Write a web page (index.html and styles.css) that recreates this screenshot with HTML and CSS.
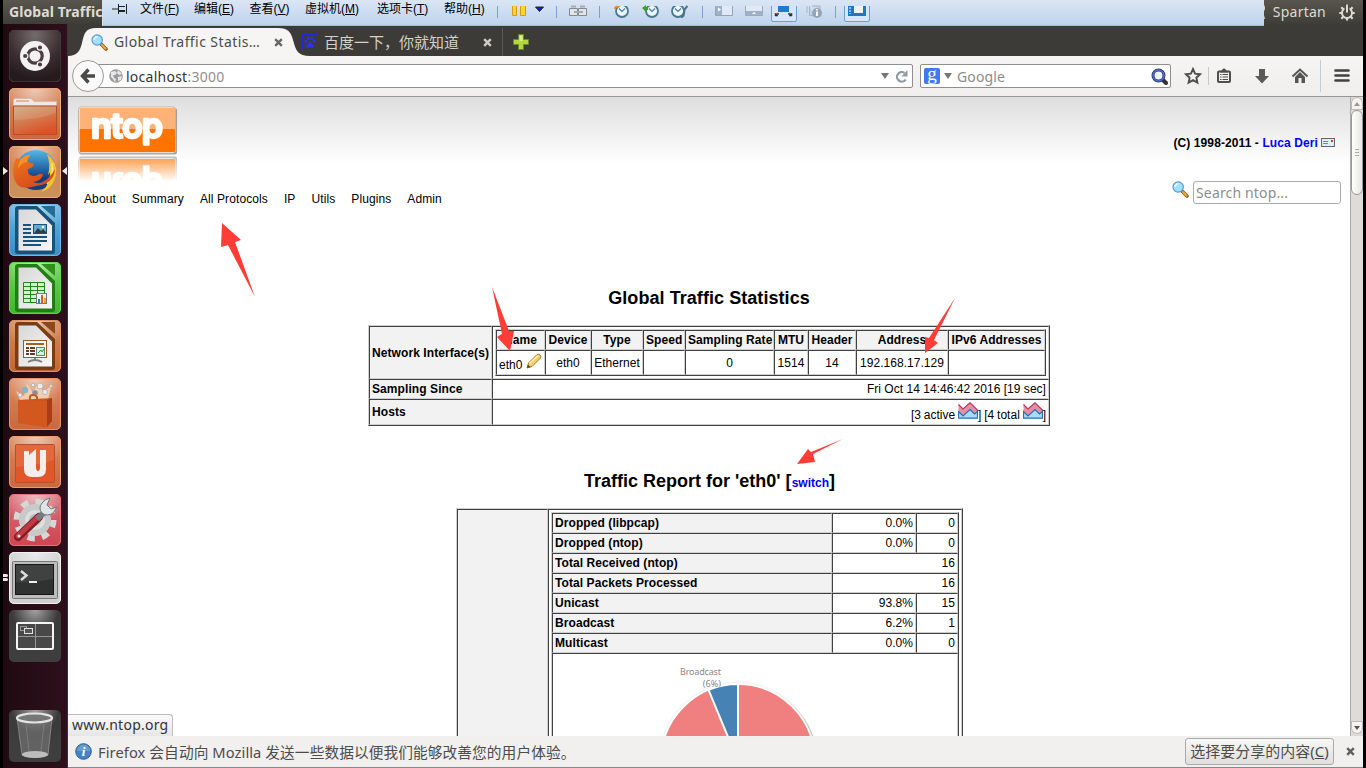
FILE: index.html
```html
<!DOCTYPE html>
<html lang="zh-CN">
<head>
<meta charset="utf-8">
<title>Global Traffic Statistics</title>
<link rel="stylesheet" href="styles.css">
</head>
<body>
<svg class="defs" width="0" height="0" aria-hidden="true">
  <defs>
    <linearGradient id="gOrange" x2="0" y2="1"><stop offset="0" stop-color="#d98b63"/><stop offset="1" stop-color="#c9683f"/></linearGradient>
    <linearGradient id="gTan" x2="0" y2="1"><stop offset="0" stop-color="#d78052"/><stop offset="1" stop-color="#c9935c"/></linearGradient>
    <linearGradient id="gBlue" x2="0" y2="1"><stop offset="0" stop-color="#69b4dd"/><stop offset="1" stop-color="#3a8fc5"/></linearGradient>
    <linearGradient id="gGreen" x2="0" y2="1"><stop offset="0" stop-color="#6fd45c"/><stop offset="1" stop-color="#42b52c"/></linearGradient>
    <linearGradient id="gBrown" x2="0" y2="1"><stop offset="0" stop-color="#d08a5c"/><stop offset="1" stop-color="#bf6a36"/></linearGradient>
    <linearGradient id="gRed" x2="0" y2="1"><stop offset="0" stop-color="#d8707a"/><stop offset="1" stop-color="#cf4450"/></linearGradient>
    <linearGradient id="gPaper" x2="1" y2="1"><stop offset="0" stop-color="#d8d8d8"/><stop offset="1" stop-color="#f6f6f6"/></linearGradient>
    <linearGradient id="gFolder" x2=".5" y2="1"><stop offset="0" stop-color="#c9a77c"/><stop offset="1" stop-color="#dc5327"/></linearGradient>
    <radialGradient id="gDark" cx=".5" cy="0" r=".75"><stop offset="0" stop-color="#a2a2a2"/><stop offset=".6" stop-color="#3a3a3a"/><stop offset="1" stop-color="#3e3e3e"/></radialGradient>
    <radialGradient id="gDash" cx=".5" cy=".1" r=".85"><stop offset="0" stop-color="#756b6d"/><stop offset=".6" stop-color="#3c2f33"/><stop offset="1" stop-color="#251a1d"/></radialGradient>
    <radialGradient id="gGlow" cx=".5" cy="0" r=".6"><stop offset="0" stop-color="#fff" stop-opacity=".55"/><stop offset="1" stop-color="#fff" stop-opacity="0"/></radialGradient>
    <linearGradient id="gGlobe" x2="0" y2="1"><stop offset="0" stop-color="#52b8e8"/><stop offset=".7" stop-color="#123e83"/></linearGradient>
    <linearGradient id="gFox" x2=".6" y2="1"><stop offset="0" stop-color="#ee7a1c"/><stop offset="1" stop-color="#d8481c"/></linearGradient>
    <symbol id="lens" viewBox="0 0 17 17"><path d="M10.5 10.5L15 15" stroke="#8a5a20" stroke-width="3.6" stroke-linecap="round"/><path d="M11 11L14.6 14.6" stroke="#f0a840" stroke-width="2" stroke-linecap="round"/><circle cx="6.2" cy="6" r="5.2" fill="#9fe0fb" stroke="#5b9ad4" stroke-width="1.2"/><path d="M3 6a3.4 3.4 0 0 1 3.6-3.3" fill="none" stroke="#e8fbff" stroke-width="1.6"/></symbol>
    <symbol id="chart" viewBox="0 0 20 17"><path d="M.5 16V2.500L5 7 12 .8 19.500 8V16Z" fill="#e390a6"/><path d="M.5 2.500L5 7 12 .8 19.500 8V10" fill="none" stroke="#b5365a" stroke-width="1.200"/><path d="M.5 16.200V9.500L5 14 12 7.500 16.500 12 19.500 9.500V16.200Z" fill="#a9dbf6" stroke="#2470b5" stroke-width="1.200"/></symbol>
    <symbol id="clock" viewBox="0 0 17 13"><circle cx="9" cy="5" r="6" fill="#e9f6fa" stroke="#47788e" stroke-width="1.800"/><path d="M6 2.500l3 3 3-3" fill="none" stroke="#557a8b" stroke-width="1.200"/></symbol>
  </defs>
</svg>

<div class="desktop">
  <nav class="launcher">
    <svg class="app" viewBox="0 0 52 52"><rect width="52" height="52" rx="6" fill="url(#gDash)" stroke="#4f4246"/><circle cx="26" cy="26" r="15" fill="#f3f1f1"/><circle cx="26" cy="26" r="7.200" fill="none" stroke="#4a3c40" stroke-width="3.200"/><g stroke="#f3f1f1" fill="#4a3c40" stroke-width="1.200"><circle cx="16.200" cy="26" r="2.700"/><circle cx="31" cy="17.500" r="2.700"/><circle cx="31" cy="34.500" r="2.700"/></g></svg>
    <svg class="app" viewBox="0 0 52 52"><rect width="52" height="52" rx="5" fill="url(#gOrange)"/><rect x=".5" y=".5" width="51" height="51" rx="5" fill="url(#gGlow)" stroke="#eca67e"/><path d="M4.500 12.500q0-2 2-2H22l3 3h22.500V18H4.500z" fill="#eee9e6" stroke="#d9b9a6"/><path d="M7 13h13" stroke="#e5a789" stroke-width="1.600"/><path d="M4.500 18h43v28.500h-43z" fill="url(#gFolder)" stroke="#b74d27"/><path d="M5 32Q28 32 47 25V18.500H5z" fill="#fff" opacity=".12"/></svg>
    <div class="app-slot">
      <svg class="app" viewBox="0 0 52 52"><rect width="52" height="52" rx="5" fill="url(#gTan)"/><rect x=".5" y=".5" width="51" height="51" rx="5" fill="url(#gGlow)" stroke="#e8ab7c"/><circle cx="27" cy="24" r="20" fill="url(#gGlobe)"/><path d="M38 8Q49 16 47 28 45 42 32 46 42 38 41 26L39 29Q42 18 38 8z" fill="#f5c527"/><path d="M43 17Q45 30 38 38" fill="none" stroke="#fbe98a" stroke-width="1.500"/><path d="M7 12q2 1 5 1 4-4 10-4-4 3-3 7l6 2q-1 4-6 5-1 6 5 7 4 0 6-2 3-1 4 1-2 6-10 7 9 4 17-6 2-2 5-7-1 15-19 17Q8 46 5 32 3 21 7 12z" fill="url(#gFox)"/><path d="M13 12q5-4 9-3-4 3-4 7-6 1-9 7 0-7 4-11z" fill="#f5902b"/></svg>
      <i class="mark mark-left"></i><i class="mark mark-right"></i>
    </div>
    <svg class="app" viewBox="0 0 52 52"><rect width="52" height="52" rx="5" fill="url(#gBlue)"/><rect x=".5" y=".5" width="51" height="51" rx="5" fill="url(#gGlow)" stroke="#6db7e3"/><path d="M9 2H28L46 19V47q0 3-3 3H9q-3 0-3-3V5q0-3 3-3z" fill="#185279"/><path d="M32 2H46V14z" fill="#256c98"/><path d="M9.500 5.500H27L43 21.500V46.500H9.500z" fill="url(#gPaper)"/><path d="M14 21h8M14 25h8M14 29h8M14 33h24M14 37h24M14 41h18" stroke="#17537e" stroke-width="2"/><rect x="24.500" y="20.500" width="13" height="9" fill="#5dacd8" stroke="#17537e"/><path d="M25 29l4-5 3 3 2-2 4 4z" fill="#303c41"/><circle cx="34" cy="23" r="1.300" fill="#fff"/></svg>
    <svg class="app" viewBox="0 0 52 52"><rect width="52" height="52" rx="5" fill="url(#gGreen)"/><rect x=".5" y=".5" width="51" height="51" rx="5" fill="url(#gGlow)" stroke="#63d64c"/><path d="M9 2H28L46 19V47q0 3-3 3H9q-3 0-3-3V5q0-3 3-3z" fill="#207e12"/><path d="M32 2H46V14z" fill="#2d911c"/><path d="M9.500 5.500H27L43 21.500V46.500H9.500z" fill="url(#gPaper)"/><path d="M14.500 20.500h21v20h-21zM14.500 24.500h21M14.500 28.500h21M14.500 32.500h21M14.500 36.500h21M21.500 20.500v20M28.500 20.500v20" fill="#d9f0ce" stroke="#24861c"/><rect x="27.500" y="31.500" width="10" height="10" fill="#f3f3f3" stroke="#777"/><path d="M29 37h2v4h-2z" fill="#2b80c2"/><path d="M32 33h2v8h-2z" fill="#dd5721"/><path d="M35 36h2v5h-2z" fill="#eba22b"/></svg>
    <svg class="app" viewBox="0 0 52 52"><rect width="52" height="52" rx="5" fill="url(#gBrown)"/><rect x=".5" y=".5" width="51" height="51" rx="5" fill="url(#gGlow)" stroke="#e0935e"/><path d="M9 2H28L46 19V47q0 3-3 3H9q-3 0-3-3V5q0-3 3-3z" fill="#7b3c14"/><path d="M32 2H46V14z" fill="#8e481e"/><path d="M9.500 5.500H27L43 21.500V46.500H9.500z" fill="url(#gPaper)"/><rect x="14.500" y="20.500" width="23" height="17" fill="#fff" stroke="#a5551e"/><path d="M17 24h18" stroke="#b15a1c" stroke-width="2"/><path d="M17 28h3M17 31h3M17 34h3M21 28h5M21 31h5M21 34h5" stroke="#6b3a1f" stroke-width="1.800"/><rect x="27.500" y="27.500" width="8" height="8" fill="#d8f2df" stroke="#4d8e68"/><path d="M29 33l3-3 1 2 2-3" stroke="#25974d" fill="none"/><path d="M26 38v2M19 42q7-4 14 0" stroke="#7d7f80" stroke-width="2" fill="none"/></svg>
    <svg class="app" viewBox="0 0 52 52"><rect width="52" height="52" rx="5" fill="url(#gOrange)"/><rect x=".5" y=".5" width="51" height="51" rx="5" fill="url(#gGlow)" stroke="#e79369"/><path d="M11 22L7 13 15 18 18 6 24 15 30 4 34 14 42 8 39 22z" fill="#f8ddc0" opacity=".75"/><g fill="#e8edf0" stroke="#a7a6a6" stroke-width=".7"><circle cx="16" cy="12" r="3" fill="#78b8d2"/><circle cx="24" cy="7" r="1.700"/><circle cx="31" cy="8" r="3"/><circle cx="26" cy="15" r="2.700" fill="#868d9e"/><circle cx="36" cy="14" r="2.600"/><circle cx="11" cy="17" r="2"/><circle cx="42" cy="8" r="1.500"/></g><path d="M9 22L43 20V43L37 49 9 45z" fill="#d0531e"/><path d="M43 20V43L38 49V22z" fill="#ab3c16"/><path d="M9 22l29 1v26L9 45z" fill="#d3581f"/><path d="M21 23v-4q0-2 3-2t4 2v4" fill="none" stroke="#b8601e" stroke-width="2"/></svg>
    <svg class="app" viewBox="0 0 52 52"><rect width="52" height="52" rx="5" fill="url(#gOrange)"/><rect x=".5" y=".5" width="51" height="51" rx="5" fill="url(#gGlow)" stroke="#ea9c72"/><rect x="6.500" y="8.500" width="39" height="38" rx="1" fill="#e15729" stroke="#b94f2a"/><path d="M7 9h38v15Q28 30 7 31z" fill="#fff" opacity=".1"/><path d="M20 19L27 13V31q0 4 2 4t2-4V14H37V33q0 8-8 8h-6q-8 0-8-8V15h5z" fill="#f3eeee"/></svg>
    <svg class="app" viewBox="0 0 52 52"><rect width="52" height="52" rx="5" fill="url(#gRed)"/><rect x=".5" y=".5" width="51" height="51" rx="5" fill="url(#gGlow)" stroke="#e1747b"/><circle cx="26" cy="26" r="18.500" fill="none" stroke="#d5d8d7" stroke-width="6" stroke-dasharray="7.300 7.230"/><circle cx="26" cy="26" r="13" fill="#dedede" stroke="#c8caca" stroke-width="6"/><circle cx="26" cy="26" r="6" fill="#b9bcbc"/><path d="M30 23L9 43" stroke="#831c25" stroke-width="8" stroke-linecap="round"/><path d="M29 23L9 42" stroke="#c13a43" stroke-width="5" stroke-linecap="round"/><path d="M28 25L38 16" stroke="#757b7e" stroke-width="6"/><path d="M33 9q-4 5 0 10 5 4 11 0l4-6-6 2-4-4 3-7q-5 1-8 5z" fill="#dfe4e6" stroke="#73797b"/><circle cx="10" cy="42" r="1.500" fill="#eee"/></svg>
    <div class="app-slot">
      <svg class="app" viewBox="0 0 52 52"><rect width="52" height="52" rx="5" fill="#d0d0d0"/><rect x=".5" y=".5" width="51" height="51" rx="5" fill="url(#gGlow)" stroke="#f1f1f1"/><rect x="3.500" y="9.500" width="45" height="37" rx="1" fill="#bcbcbc" stroke="#777"/><rect x="6.500" y="12.500" width="38" height="30" fill="#303232" stroke="#161616"/><path d="M7 13h37v14Q26 31 7 30z" fill="#fff" opacity=".08"/><path d="M12 19l5.500 4.500L12 28" fill="none" stroke="#ddd" stroke-width="2.400"/><path d="M20 30h8" stroke="#eee" stroke-width="2"/></svg>
      <i class="dot dot-a"></i><i class="dot dot-b"></i>
    </div>
    <svg class="app" viewBox="0 0 52 52"><rect width="52" height="52" rx="5" fill="url(#gDark)"/><rect x="8" y="13" width="36" height="26" rx="1" fill="#484848" stroke="#f5f5f5" stroke-width="2"/><path d="M9 26.500h34M26.500 14v24" stroke="#969696"/><rect x="11.500" y="16.500" width="6" height="4" fill="#454545" stroke="#999"/><rect x="15.500" y="18.500" width="8" height="5" fill="#555" stroke="#e0e0e0"/></svg>
    <svg class="app app-trash" viewBox="0 0 52 52"><rect width="52" height="52" rx="5" fill="url(#gDark)"/><path d="M8 8L13 45q12 5 26 0L43 8z" fill="#777" fill-opacity=".65" stroke="#999" stroke-width=".7"/><path d="M17 14l3 27M35 14l-3 27" stroke="#aaa" opacity=".35"/><ellipse cx="26" cy="44.500" rx="13" ry="3.500" fill="#bdbdbd"/><ellipse cx="25.500" cy="8" rx="17.500" ry="4.500" fill="#777" stroke="#e4e4e4" stroke-width="2.200"/></svg>
  </nav>

  <div class="screen">
    <header class="panel">
      <span class="panel-title">Global Traffic</span>
      <span class="session">
        <svg width="12" height="18" viewBox="0 0 12 18"><circle cx="5" cy="5" r="4" fill="#dfdbd2"/><path d="M0 16q0-6 5-6 3 0 4 6z" fill="#dfdbd2"/></svg>
        <span class="session-name">Spartan</span>
        <svg width="16" height="17" viewBox="0 0 16 17"><circle cx="8" cy="9" r="5" fill="none" stroke="#dfdbd2" stroke-width="2"/><path d="M8 13v3.500M.3 9h3M12.700 9h3M2.300 3.300L5 6M13.700 3.300L11 6M2.300 14.700L5 12M13.700 14.700L11 12" stroke="#dfdbd2" stroke-width="2.200"/><path d="M8 0v9" stroke="#4a4842" stroke-width="5"/><path d="M8 .5v8" stroke="#dfdbd2" stroke-width="2"/></svg>
      </span>
    </header>

    <div class="tabs">
      <div class="tab tab-active">
        <svg class="tab-shape" width="242" height="28" viewBox="0 0 242 28"><path d="M0 28C9 28 12 23 14 15C16 5 18 0 28 0H210C220 0 223 4 225 12C228 23 230 28 242 28Z" fill="#f6f5f4"/></svg>
        <svg class="tab-icon" width="17" height="17"><use href="#lens"/></svg>
        <span class="tab-text">Global Traffic Statis…</span>
        <svg class="tab-x" width="9" height="9" viewBox="0 0 9 9"><path d="M1.200 1.200l6.600 6.600M7.800 1.200L1.200 7.800" stroke="#686864" stroke-width="2.400"/></svg>
      </div>
      <div class="tab tab-idle">
        <svg width="16" height="16" viewBox="0 0 16 16"><rect x=".5" y=".5" width="15" height="15" fill="none" stroke="#2328e0"/><g fill="#2a31f0"><ellipse cx="3.700" cy="7.200" rx="1.300" ry="1.700"/><ellipse cx="6.200" cy="4.200" rx="1.300" ry="1.800"/><ellipse cx="9.800" cy="4.200" rx="1.300" ry="1.800"/><ellipse cx="12.300" cy="7.200" rx="1.300" ry="1.700"/><path d="M8 7.500q1.500 0 2.500 2.500 2 1 1.300 2.800t-3.800.7q-3 1-3.800-.7T5.500 10q1-2.500 2.500-2.500z"/></g></svg>
        <span class="tab-text tab-text-cjk">百度一下，你就知道</span>
        <svg class="tab-x2" width="9" height="9" viewBox="0 0 9 9"><path d="M1.200 1.200l6.600 6.600M7.800 1.200L1.200 7.800" stroke="#cfccc4" stroke-width="2.400"/></svg>
      </div>
      <svg class="tab-new" width="16" height="16" viewBox="0 0 16 16"><path d="M5.500.5h5v5h5v5h-5v5h-5v-5h-5v-5h5z" fill="#b7d63d" stroke="#5f8f28"/><path d="M6.500 7V1.500h3V7" fill="#e0ee8c"/></svg>
    </div>

    <div class="toolbar">
      <span class="back"><svg width="16" height="16" viewBox="0 0 16 16"><path d="M8.500 1.500L2.500 8l6 6.500M3 8h12" fill="none" stroke="#4a4a47" stroke-width="3.400"/></svg></span>
      <div class="url">
        <svg width="14" height="14" viewBox="0 0 14 14"><circle cx="7" cy="7" r="6.800" fill="#9c9c9c"/><path d="M2 3l4-1 2 2-2 2H4l1 3 2 1-1 3-2-3-2-2zM9 1l4 4-3 1-2-2zM9 8l4-1-1 4-3 1z" fill="#e8e8e8"/></svg>
        <span class="url-text">localhost<span class="url-port">:3000</span></span>
        <svg class="url-drop" width="8" height="6" viewBox="0 0 8 6"><path d="M0 0h8L4 6z" fill="#777"/></svg>
        <svg width="12" height="13" viewBox="0 0 12 13"><path d="M9.800 9.500A4.800 4.800 0 1 1 8.500 2.800" fill="none" stroke="#8f9aa5" stroke-width="2.200"/><path d="M11.500 0v6.500H5.500z" fill="#8f9aa5"/></svg>
      </div>
      <div class="search">
        <span class="google">g</span>
        <svg class="search-drop" width="8" height="6" viewBox="0 0 8 6"><path d="M0 0h8L4 6z" fill="#777"/></svg>
        <span class="search-text">Google</span>
        <svg width="17" height="17" viewBox="0 0 17 17"><path d="M11 11l4 4" stroke="#333" stroke-width="4" stroke-linecap="round"/><circle cx="7.500" cy="7.500" r="5.500" fill="#eef2fb" stroke="#2c3c8c" stroke-width="3"/><circle cx="7.500" cy="7.500" r="5.500" fill="none" stroke="#6f84cf"/></svg>
      </div>
      <svg class="tools" width="170" height="32" viewBox="1182 60 170 32">
        <path d="M1193 69l2.100 4.600 5 .6-3.700 3.500 1 5-4.400-2.500-4.400 2.500 1-5-3.700-3.500 5-.6z" fill="none" stroke="#4e4e4c" stroke-width="1.900"/>
        <path d="M1208.500 67v18" stroke="#c3c9ce"/>
        <rect x="1218" y="71.500" width="12" height="10.500" rx="1" fill="#f3f2f1" stroke="#4e4e4c" stroke-width="2"/><path d="M1220 71l2-.5q0-2 2-2t2 2l2 .5v1.500h-8zM1220 74h1.500v1H1220zM1222.500 74h5.500v1h-5.500zM1222.500 76.500h5.500v1h-5.500zM1222.500 79h5.500v1h-5.500zM1220 76.500h1.500v1H1220zM1220 79h1.500v1H1220z" fill="#4e4e4c"/>
        <path d="M1259 69h6v7h4l-7 7.500-7-7.500h4z" fill="#595958"/>
        <path d="M1292.500 76.500l7.500-7 7.500 7" fill="none" stroke="#555" stroke-width="2"/><path d="M1295 77l5-5 5 5v6h-3.500v-5h-3v5h-3.500z" fill="#555"/>
        <path d="M1320.500 60v32" stroke="#c2ccd6"/>
        <path d="M1335.500 70.500h13M1335.500 75.500h13M1335.500 80.500h13" stroke="#424240" stroke-width="2.600" stroke-linecap="round"/>
      </svg>
    </div>

    <div class="viewport">
      <main class="page">
        <div class="banner">
          <svg class="logo" width="102" height="49" viewBox="0 0 102 49">
            <rect x="2" y="2" width="98" height="46.500" rx="2.500" fill="#777" opacity=".65"/>
            <rect x="1.500" y="1" width="97" height="46" rx="2.500" fill="#fff" stroke="#bdb5ac"/>
            <rect x="2.500" y="2" width="95.500" height="22" rx="1" fill="#ffb176"/><rect x="2.500" y="23" width="95.500" height="23" rx="1" fill="#ff7400"/>
            <text class="logo-text" x="14" y="31.500" textLength="72" lengthAdjust="spacing">ntop</text>
          </svg>
          <div class="credit">(C) 1998-2011 - <a>Luca Deri</a><svg width="14" height="9" viewBox="0 0 14 9"><rect x=".5" y=".5" width="13" height="8" fill="#dcecf8" stroke="#666"/><path d="M2 3.500h5M2 5.500h5" stroke="#4f91d2"/><path d="M10 2h2v2h-2z" fill="#d33"/></svg></div>
        </div>
        <div class="menu-row">
          <nav class="menu"><span>About</span><span>Summary</span><span>All Protocols</span><span>IP</span><span>Utils</span><span>Plugins</span><span>Admin</span></nav>
          <div class="find"><svg width="17" height="17"><use href="#lens"/></svg><span class="find-box">Search ntop...</span></div>
        </div>

        <h1 class="heading">Global Traffic Statistics</h1>
        <table class="grid grid-main">
          <tr class="row-if"><th class="c-label">Network Interface(s)</th><td class="c-value">
            <table class="grid grid-if">
              <colgroup><col class="w49"><col class="w46"><col class="w52"><col class="w42"><col class="w89"><col class="w34"><col class="w48"><col class="w92"><col class="w97"></colgroup>
              <tr class="row-20"><th>Name</th><th>Device</th><th>Type</th><th>Speed</th><th>Sampling Rate</th><th>MTU</th><th>Header</th><th>Address</th><th>IPv6 Addresses</th></tr>
              <tr class="row-25"><td class="if-name">eth0 <svg width="16" height="16" viewBox="0 0 16 16"><path d="M1 15l1.500-5L11 1.500q1.500-1 3 .5t.5 3L6 13.500z" fill="#f6cf6a" stroke="#a8742c"/><path d="M3.500 10.500L12 2.500" stroke="#fff0b5" stroke-width="1.500"/><path d="M1 15l1-3.500 2.500 2.500z" fill="#614525"/></svg></td><td>eth0</td><td>Ethernet</td><td></td><td>0</td><td>1514</td><td>14</td><td>192.168.17.129</td><td></td></tr>
            </table>
          </td></tr>
          <tr class="row-20"><th class="c-label">Sampling Since</th><td class="num">Fri Oct 14 14:46:42 2016 [19 sec]</td></tr>
          <tr class="row-26"><th class="c-label">Hosts</th><td class="num hosts">[3 active <svg width="20" height="17"><use href="#chart"/></svg>] [4 total <svg width="20" height="17"><use href="#chart"/></svg>]</td></tr>
        </table>

        <h1 class="heading heading-report">Traffic Report for 'eth0' [<a class="switch">switch</a>]</h1>
        <table class="grid grid-report">
          <tr><th class="side"></th><td>
            <table class="grid grid-packets">
              <colgroup><col class="w280"><col class="w84"><col class="w42"></colgroup>
              <tr class="row-20"><th>Dropped (libpcap)</th><td>0.0%</td><td>0</td></tr>
              <tr class="row-20"><th>Dropped (ntop)</th><td>0.0%</td><td>0</td></tr>
              <tr class="row-20"><th>Total Received (ntop)</th><td colspan="2">16</td></tr>
              <tr class="row-20"><th>Total Packets Processed</th><td colspan="2">16</td></tr>
              <tr class="row-20"><th>Unicast</th><td>93.8%</td><td>15</td></tr>
              <tr class="row-20"><th>Broadcast</th><td>6.2%</td><td>1</td></tr>
              <tr class="row-20"><th>Multicast</th><td>0.0%</td><td>0</td></tr>
              <tr><td class="pie-cell" colspan="3">
                <svg class="pie" width="400" height="200" viewBox="555 657 400 200">
                  <circle cx="738" cy="760" r="79.500" fill="#000" opacity=".04"/>
                  <circle cx="739.500" cy="761.500" r="77.500" fill="none" stroke="#999" stroke-width="1.300" opacity=".7"/>
                  <circle cx="738" cy="760" r="77" fill="#f08080" stroke="#fff" stroke-width="2"/>
                  <path d="M738 760V683A77 77 0 0 0 708.500 688.900z" fill="#4682b4" stroke="#fff" stroke-width="2"/>
                  <text class="pie-label" x="721" y="674" textLength="41">Broadcast</text><text class="pie-label" x="721" y="686">(6%)</text>
                </svg>
              </td></tr>
            </table>
          </td></tr>
        </table>
        <div class="status">www.ntop.org</div>
      </main>
      <aside class="scroll">
        <span class="scroll-btn"><svg width="6" height="4" viewBox="0 0 6 4"><path d="M0 4l3-4 3 4z" fill="#999"/></svg></span>
        <span class="thumb"><i></i><i></i><i></i></span>
        <span class="trough"></span>
        <span class="scroll-btn scroll-down"><svg width="6" height="4" viewBox="0 0 6 4"><path d="M0 0h6L3 4z" fill="#555"/></svg></span>
      </aside>
    </div>

    <footer class="notice">
      <svg width="17" height="17" viewBox="0 0 17 17"><circle cx="8.500" cy="8.500" r="7.800" fill="#4584c0" stroke="#2d6195"/><path d="M2 8a6.500 6.500 0 0 1 13 0z" fill="#fff" opacity=".2"/><text class="info-i" x="8.500" y="13.200">i</text></svg>
      <span class="notice-text">Firefox 会自动向 Mozilla 发送一些数据以便我们能够改善您的用户体验。</span>
      <span class="notice-btn">选择要分享的内容(<u>C</u>)</span>
      <svg class="notice-x" width="9" height="9" viewBox="0 0 9 9"><path d="M1.200 1.200l6.600 6.600M7.800 1.200L1.200 7.800" stroke="#5f5f5c" stroke-width="2.400"/></svg>
    </footer>
  </div>
</div>

<div class="vmbar">
  <svg class="pin" width="16" height="12" viewBox="0 0 16 12"><path d="M0 6h6M6.500 1v10M7 3.500h6M7 7.500h6M7 8.500h6M14.500 1v10" stroke="#222" fill="none"/></svg>
  <span class="vm-item vm-1">文件(<u>F</u>)</span><span class="vm-item vm-2">编辑(<u>E</u>)</span><span class="vm-item vm-3">查看(<u>V</u>)</span><span class="vm-item vm-4">虚拟机(<u>M</u>)</span><span class="vm-item vm-5">选项卡(<u>T</u>)</span><span class="vm-item vm-6">帮助(<u>H</u>)</span>
  <svg class="vm-tools" width="380" height="26" viewBox="495 0 380 26">
    <path d="M497.500 6v12M556.500 6v12M599.500 6v12M702.500 6v12M835.500 6v12" stroke="#7a9fd0"/>
    <path d="M512.500 6v9.500h4V6M520.500 6v9.500h5V6" fill="#ffd42a" stroke="#d99b12"/>
    <path d="M535.500 7h8l-4 4.500z" fill="#0b1cd6" stroke="#223"/>
    <path d="M569.500 8.500h8v7h-8zM578.500 8.500h8v7h-8z" fill="#e3e6e8" stroke="#84898f"/><path d="M574 12h9M571 6.500h5M580 6.500h5" stroke="#a5aab0" stroke-width="2"/>
    <svg x="613" y="6" width="17" height="13" viewBox="0 0 17 13"><use href="#clock"/></svg><path d="M615 9q0-3 4-2" fill="none" stroke="#f58a2c" stroke-width="2"/>
    <svg x="643" y="6" width="17" height="13" viewBox="0 0 17 13"><use href="#clock"/></svg><path d="M642 8l4-3v2h2v3h-2v2z" fill="#39a51f"/>
    <svg x="669" y="6" width="17" height="13" viewBox="0 0 17 13"><use href="#clock"/></svg><path d="M681 17q3 0 3-4t3.500-7" fill="none" stroke="#49768c" stroke-width="2"/>
    <path d="M715.500 6v9.500h17V6" fill="#e1e9f4" stroke="#93a3bb"/><path d="M716 6h6v9h-6z" fill="#9fb0c9"/><path d="M718 7.500l3 2-3 2z" fill="#fff"/>
    <path d="M745.500 6v9.500h17V6" fill="#e1e9f4" stroke="#9caac0"/><path d="M746 11h16v4h-16z" fill="#9fb0c9"/><path d="M752 14l2-2 2 2z" fill="#fff"/>
    <path d="M771.500 6v14q0 1.500 1.500 1.500h22q1.500 0 1.500-1.500V6" fill="#d5e6fb" stroke="#6f9bd6"/><path d="M778 6h11v6h-11z" fill="#1d7bd2"/><path d="M775 16v-3l1 1 2-1 1 1-2 1 1 1zM792 16v-3l-1 1-2-1-1 1 2 1-1 1z" fill="#333" stroke="#333" stroke-width=".5"/>
    <path d="M807 6v7M809.500 6v9.500h4M812 6h8v3" stroke="#a8b6c9" fill="#c3d0e2"/><circle cx="817" cy="13" r="5" fill="#96a4b8"/><path d="M817 11.500v4.500M817 9v1.500" stroke="#f3f6fa" stroke-width="2"/>
    <path d="M844.500 6v14q0 1.500 1.500 1.500h22q1.500 0 1.500-1.500V6" fill="#d5e6fb" stroke="#6f9bd6"/><path d="M848 6h18v10h-18z" fill="#1d78c8"/><path d="M854 6h9v7h-9z" fill="#f1f1ea"/><path d="M850 7v7" stroke="#fff" stroke-dasharray="2 1"/>
  </svg>
</div>

<svg class="arrows" width="1366" height="768" viewBox="0 0 1366 768" fill="#ff3c36">
  <path d="M222 223L241 240 235 242 255 297 228 245 221 247z"/>
  <path d="M492 287L509 331 514 331 510 351 497 337 502 334z"/>
  <path d="M955 298L934 340 938 343 925 353 925 337 929 338z"/>
  <path d="M843 439L813 454 815 462 797 464 808 449 811 452z"/>
</svg>
</body>
</html>
```
FILE: styles.css
```css
body { margin: 0; width: 1366px; height: 768px; overflow: hidden; background: #000; font-family: "Liberation Sans", Arial, sans-serif; font-size: 12px; color: #000; }
svg { display: block; flex: none; }
.defs { position: absolute; }
.desktop { display: flex; width: 1360px; height: 768px; padding: 0 3px; }

.launcher { display: flex; flex-direction: column; gap: 6px; width: 58px; height: 738px; padding: 30px 0 0 6px; border-right: 1px solid #42303a; background: linear-gradient(90deg, #200a12, #2d101b); }
.app { width: 52px; height: 52px; }
.app-slot { position: relative; }
.app-trash { margin-top: 42px; }
.mark { position: absolute; top: 21px; border: 5px solid transparent; }
.mark-left { left: -6px; border-width: 4px 0 4px 5px; border-left-color: #e8e8e8; }
.mark-right { left: 53px; border-width: 4px 5px 4px 0; border-right-color: #e8e8e8; }
.dot { position: absolute; left: -6px; width: 5px; height: 3px; border-radius: 0 2px 2px 0; background: #e8e8e8; }
.dot-a { top: 22px; }
.dot-b { top: 26px; }

.screen { display: flex; flex-direction: column; width: 1295px; height: 768px; font-family: "Noto Sans", "Noto Sans CJK SC", sans-serif; }
.panel { display: flex; align-items: center; justify-content: space-between; height: 24px; margin-left: -65px; padding: 0 8px 0 6px; position: relative; background: linear-gradient(#59564e, #3e3d38); color: #dfdbd2; }
.panel-title { width: 93px; overflow: hidden; white-space: nowrap; font: bold 14px/24px "Noto Sans", sans-serif; letter-spacing: 0.1px; }
.session { display: flex; align-items: center; }
.session-name { margin: 0 13px 0 5px; font-size: 14px; line-height: 20px; padding-bottom: 1px; letter-spacing: 0.25px; }

.tabs { display: flex; height: 28px; padding-top: 4px; background: #3c3b37; }
.tab { display: flex; align-items: center; }
.tab-active { position: relative; width: 211px; padding-left: 23px; z-index: 1; }
.tab-shape { position: absolute; left: 0; top: 0; }
.tab-icon, .tab-active .tab-text, .tab-x { position: relative; }
.tab-text { width: 152px; margin-left: 6px; padding-bottom: 2px; font-size: 14px; letter-spacing: 0.42px; color: #4c4c4c; white-space: nowrap; }
.tab-x { margin-left: 8px; }
.tab-idle { position: relative; z-index: 2; width: 201px; border-right: 1px solid #5c5b56; box-sizing: border-box; }
.tab-text.tab-text-cjk { width: 146px; font: 15px "Noto Sans CJK SC", sans-serif; letter-spacing: 0; color: #d5d1c8; }
.tab-x2 { margin-left: 13px; }
.tab-new { margin: 6px 0 0 10px; }

.toolbar { display: flex; align-items: center; height: 40px; border-bottom: 1px solid #979693; background: linear-gradient(#f6f5f4, #efeeec); }
.back { display: flex; align-items: center; justify-content: center; width: 30px; height: 30px; margin-left: 4px; border: 1px solid #9a9a98; border-radius: 50%; background: #f9f9f9; z-index: 1; }
.url, .search { display: flex; align-items: center; box-sizing: border-box; height: 24px; border: 1px solid #8f8f8f; border-radius: 2px; background: #fff; }
.url { width: 817px; margin-left: -8px; padding: 0 4px 0 12px; }
.url-text { margin-left: 3px; flex: 1; font-size: 14px; letter-spacing: 0.25px; color: #333; }
.url-port { color: #8f8f8f; }
.url-drop { margin-right: 7px; }
.search { width: 251px; margin-left: 7px; padding: 0 2px 0 3px; }
.google { width: 16px; height: 16px; border-radius: 2px; background: #4277f5; color: #fff; font: 19px/12px "Liberation Serif", serif; text-align: center; }
.search-drop { margin-left: 4px; }
.search-text { flex: 1; margin-left: 5px; font-size: 14px; letter-spacing: 0.15px; color: #8d8d8d; }
.tools { margin-left: 11px; }

.viewport { display: flex; height: 639px; }
.page { position: relative; width: 1282px; height: 639px; overflow: hidden; background: linear-gradient(#dedede, #fff 66px); font-family: "Liberation Sans", Arial, sans-serif; }
.banner { display: flex; align-items: flex-start; justify-content: space-between; height: 83px; padding: 9px 15px 0 9px; }
.logo { -webkit-box-reflect: below 1px linear-gradient(transparent 48%, rgba(255, 255, 255, 0.75)); }
.logo-text { font: 600 34px Inter, sans-serif; fill: #fff; stroke: #fff; stroke-width: 2.5px; stroke-linejoin: round; }
.credit { display: flex; align-items: center; height: 15px; margin-top: 29px; font-weight: bold; white-space: pre; letter-spacing: 0.1px; }
.credit svg { margin-left: 3px; }
.credit a, .switch { color: #00f; }
.menu-row { display: flex; justify-content: space-between; padding: 0 9px 0 16px; height: 28px; margin-top: -8px; }
.menu { display: flex; gap: 16px; margin-top: 11px; line-height: 14px; letter-spacing: 0.1px; }
.find { display: flex; gap: 4px; }
.find-box { box-sizing: border-box; width: 148px; height: 23px; padding-left: 2px; border: 1px solid #aaa; border-radius: 3px; background: #fff; font: 14px/21px "Noto Sans", sans-serif; letter-spacing: 0.15px; color: #8e8e8e; }
.heading { margin: 79px 0 0; height: 20px; font-size: 18px; line-height: 20px; letter-spacing: 0.06px; text-align: center; }
.heading-report { margin-top: 45px; letter-spacing: 0; padding-left: 1px; }
.switch { font-size: 12px; }

.grid { border-collapse: separate; border-spacing: 0; border: 1px solid; border-color: #cfcfcf #404040 #404040 #cfcfcf; table-layout: fixed; font-size: 12px; line-height: 14px; letter-spacing: 0.04px; }
.grid th, .grid td { box-sizing: border-box; padding: 2px; border: 1px solid; border-color: #404040 #cfcfcf #cfcfcf #404040; }
.grid th { background: #f2f2f2; text-align: left; white-space: nowrap; letter-spacing: 0.08px; }
.grid svg { display: inline-block; vertical-align: baseline; }
.grid-main { width: 682px; margin: 17px 0 0 300px; }
.c-label { width: 123px; }
.row-if { height: 53px; }
.row-20 { height: 20px; }
.row-25 { height: 25px; }
.row-26 { height: 26px; }
.grid .num { text-align: right; padding-top: 0; padding-bottom: 0; letter-spacing: 0.03px; }
.grid .hosts { word-spacing: -0.6px; }
.grid-if { width: 551px; }
.grid-if th, .grid-if td { text-align: center; white-space: nowrap; }
.grid-if .if-name { text-align: left; padding-top: 0; padding-bottom: 0; }
.w34 { width: 34px; } .w42 { width: 42px; } .w46 { width: 46px; } .w48 { width: 48px; } .w49 { width: 49px; } .w52 { width: 52px; } .w84 { width: 84px; } .w89 { width: 89px; } .w92 { width: 92px; } .w97 { width: 97px; } .w280 { width: 280px; }
.grid-report { width: 507px; margin: 17px 0 0 388px; }
.side { width: 91px; }
.grid-packets { width: 408px; }
.grid-packets td { text-align: right; }
.grid-packets .pie-cell { height: 210px; }
.pie-cell .pie { display: block; }
.pie-label { font: 9px "Noto Sans", sans-serif; fill: #888; text-anchor: end; }
.status { position: absolute; left: 0; bottom: 0; box-sizing: border-box; width: 105px; height: 22px; padding-left: 4px; border: 1px solid #bdbdbd; border-width: 1px 1px 0 0; border-radius: 0 4px 0 0; background: linear-gradient(#fafafa, #e6e6e6); font: 14px/20px "Noto Sans", sans-serif; letter-spacing: 0.25px; color: #333; white-space: nowrap; }

.scroll { display: flex; flex-direction: column; box-sizing: border-box; width: 13px; padding-bottom: 2px; border-left: 1px solid #aaa; background: #dedcda; }
.scroll-btn { display: flex; justify-content: center; align-items: center; height: 13px; border-radius: 6px 6px 0 0; background: #f4f3f2; box-shadow: inset 0 0 0 1px #bbb; }
.scroll-down { border-radius: 0 0 6px 6px; }
.thumb { display: flex; flex-direction: column; gap: 2px; align-items: center; justify-content: center; height: 83px; border: 1px solid #999; border-radius: 6px; background: linear-gradient(90deg, #fff, #e6e5e4); }
.thumb i { width: 4px; height: 1px; background: #aaa; }
.trough { flex: 1; }

.notice { display: flex; align-items: center; height: 31px; border-bottom: 1px solid #888; padding: 0 8px 0 7px; background: #f1f0ee; font-size: 14px; color: #4c4c4c; }
.notice-text { flex: 1; margin-left: 6px; font-size: 14.700px; letter-spacing: 0.08px; white-space: nowrap; }
.notice-btn { box-sizing: border-box; width: 149px; height: 27px; border: 1px solid #aaa; border-radius: 3px; background: linear-gradient(#f7f7f6, #e0dfde); font-size: 15px; line-height: 25px; text-align: center; }
.notice-x { margin-left: 12px; }
.info-i { font: italic bold 13px "Liberation Serif", serif; fill: #fff; text-anchor: middle; }

.vmbar { position: absolute; left: 102px; top: 0; box-sizing: border-box; display: flex; width: 1162px; height: 26px; border-left: 1px solid #cfe0f5; border-bottom: 1px solid #9fbce0; background: linear-gradient(#dae6f5, #bfd3ec); font: 12px/18px "Liberation Sans", "Noto Sans CJK SC", sans-serif; }
.pin { margin: 3px 12px 0 9px; }
.vm-item { white-space: nowrap; }
.vm-1 { width: 54px; }
.vm-2, .vm-3 { width: 55.500px; }
.vm-4 { width: 72px; }
.vm-5 { width: 67px; }
.vm-6 { width: 51px; }
.arrows { position: absolute; left: 0; top: 0; pointer-events: none; }
```
